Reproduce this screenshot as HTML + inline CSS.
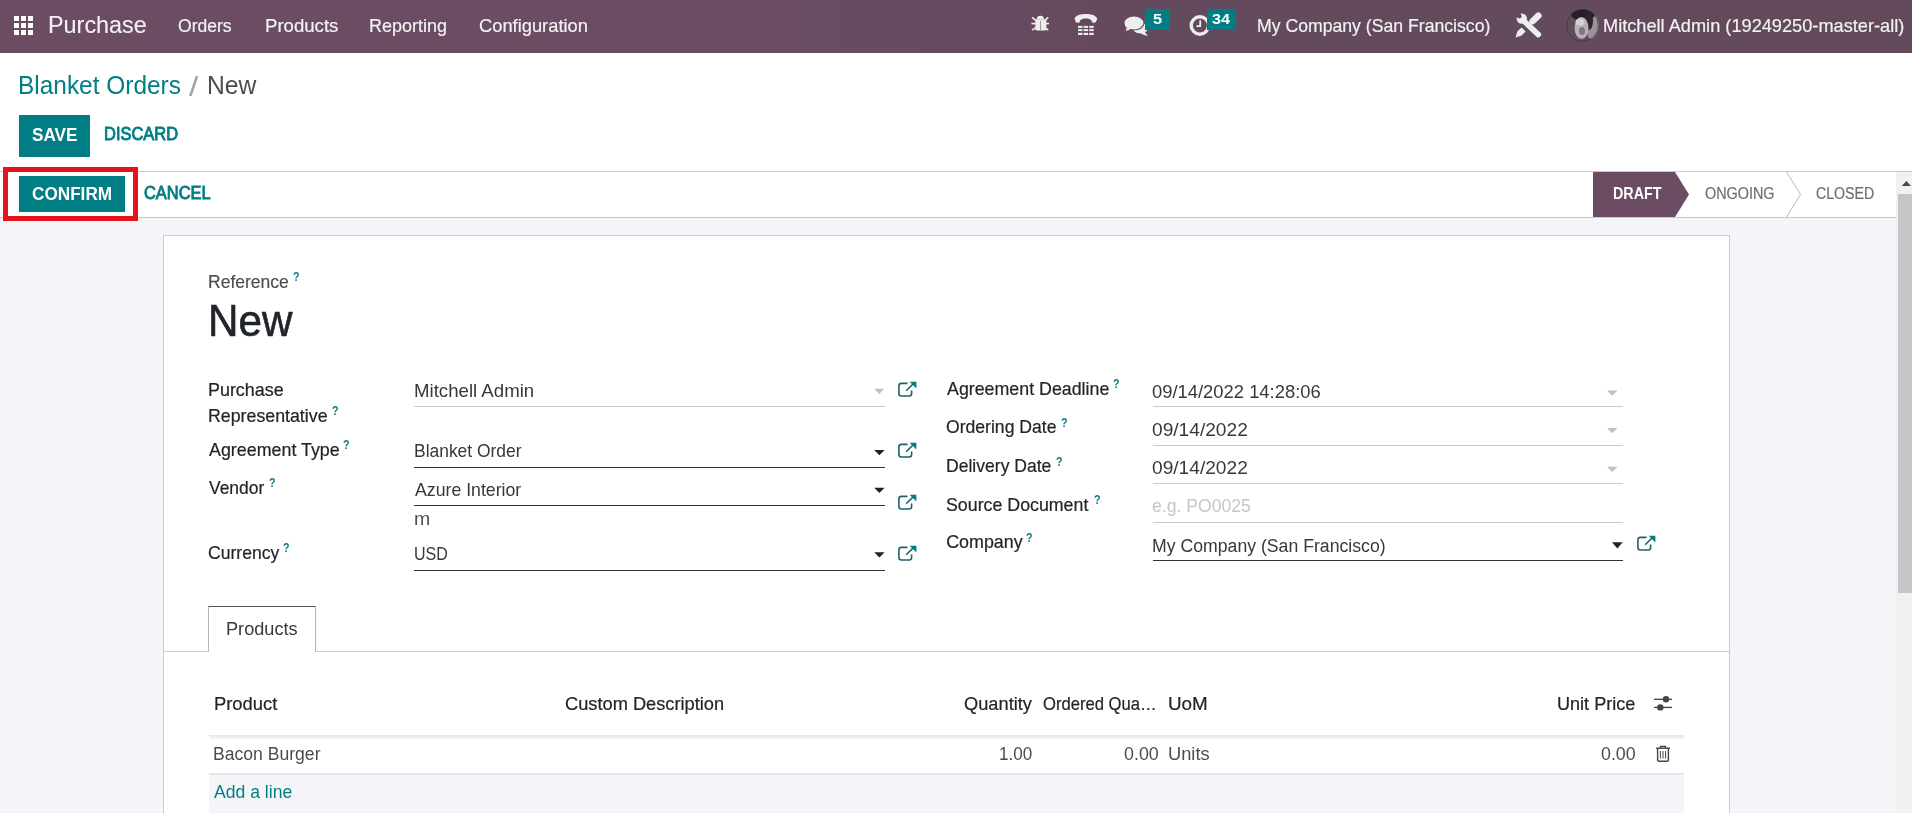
<!DOCTYPE html>
<html><head><meta charset="utf-8"><style>
html,body{margin:0;padding:0;width:1912px;height:813px;overflow:hidden;background:#fff;}
body{position:relative;font-family:"Liberation Sans",sans-serif;}
.t{position:absolute;white-space:pre;line-height:1;transform-origin:0 0;}
.b{position:absolute;box-sizing:border-box;}
svg{position:absolute;overflow:visible;}
</style></head><body>
<!-- navbar -->
<div class="b" style="left:0;top:0;width:1912px;height:53px;background:linear-gradient(to right,#6b4c63 0px,#6b4c63 720px,#654a5e 1100px,#624a5b 1912px)"></div>
<svg style="left:14px;top:16px" width="19" height="19" viewBox="0 0 19 19" fill="#fff">
<rect x="0" y="0" width="5" height="5"/><rect x="7" y="0" width="5" height="5"/><rect x="14" y="0" width="5" height="5"/>
<rect x="0" y="7" width="5" height="5"/><rect x="7" y="7" width="5" height="5"/><rect x="14" y="7" width="5" height="5"/>
<rect x="0" y="14" width="5" height="5"/><rect x="7" y="14" width="5" height="5"/><rect x="14" y="14" width="5" height="5"/>
</svg>
<!-- bug -->
<svg style="left:1030px;top:14px" width="20" height="20" viewBox="0 0 20 20" fill="#eee" stroke="none">
<path d="M6.6 5.3 A3.7 3.5 0 0 1 14 5.3 Z"/>
<rect x="5.3" y="5.3" width="11.1" height="11.3" rx="1.5"/>
<path d="M1.4 9.6 H19" stroke="#eee" stroke-width="1.6"/>
<path d="M2.2 3.4 L6 6.6 M18.2 3.4 L14.6 6.6 M2.2 16.2 L6 13.4 M18.2 16.2 L14.6 13.4" stroke="#eee" stroke-width="1.6"/>
<rect x="10" y="7" width="0.9" height="9" fill="#9a8a96"/>
</svg>
<!-- phone -->
<svg style="left:1074px;top:13px" width="24" height="23" viewBox="0 0 24 23" fill="#eee">
<path d="M0.5 5.2 C3 1.5 7 0.9 11.7 0.9 C16.4 0.9 20.6 1.5 23.3 5.2 L22.3 8.2 C21.4 9.8 19.6 10.2 18.2 9.6 L17.4 7.2 C15.6 5.7 13.8 5.4 11.7 5.4 C9.6 5.4 7.8 5.7 6.2 7.2 L5.4 9.6 C4 10.2 2.2 9.8 1.4 8.2 Z"/>
<rect x="4" y="12.9" width="4.5" height="2"/><rect x="9.6" y="12.9" width="4.5" height="2"/><rect x="15.2" y="12.9" width="4.5" height="2"/>
<rect x="4" y="16.1" width="4.5" height="2"/><rect x="9.6" y="16.1" width="4.5" height="2"/><rect x="15.2" y="16.1" width="4.5" height="2"/>
<rect x="4" y="19.8" width="4.5" height="2.2"/><rect x="9.6" y="19.8" width="4.5" height="2.2"/><rect x="15.2" y="19.8" width="4.5" height="2.2"/>
</svg>
<!-- chat -->
<svg style="left:1123px;top:15px" width="27" height="22" viewBox="0 0 27 22" fill="#eee">
<path d="M14 12 C18 12 21 9.5 21.5 8.5 C24 10 25 12 24.5 14.5 C24 16 23 17 22 17.5 L25 21 C22 20.5 19.5 19.5 18 18.5 C14.5 18.5 12 17.5 10.5 15.5 C12 15 13 13 14 12Z"/>
<path d="M11 1 C16.5 1 21 4 21 8 C21 12 16.5 15 11 15 C9.8 15 8.6 14.8 7.5 14.6 C6 15.8 3.5 16.5 1.3 16.4 C2.4 15.4 3 14.2 3.2 13 C1.8 11.7 1 10 1 8 C1 4 5.5 1 11 1Z" stroke="#6b4c63" stroke-width="1.1"/>
</svg>
<div class="b" style="left:1145px;top:8.5px;width:24.5px;height:21.5px;background:#017e84"></div>
<!-- clock -->
<svg style="left:1189px;top:14px" width="23" height="23" viewBox="0 0 23 23">
<circle cx="10.9" cy="11.5" r="8.7" fill="none" stroke="#eee" stroke-width="3.4"/>
<path d="M11.2 6.3 V12.2 H7.4" fill="none" stroke="#eee" stroke-width="1.8"/>
</svg>
<div class="b" style="left:1207px;top:8.5px;width:29px;height:21.5px;background:#017e84"></div>
<!-- tools -->
<svg style="left:0;top:0" width="1912" height="60" viewBox="0 0 1912 60">
<defs><mask id="wm"><rect x="1500" y="0" width="60" height="50" fill="#fff"/><circle cx="1519.3" cy="16.2" r="2.3" fill="#000"/><polygon points="1520.9,14.6 1517.7,17.8 1509.5,9.6 1512.7,6.4" fill="#000"/></mask></defs>
<g fill="#eee" mask="url(#wm)"><circle cx="1521.8" cy="18.6" r="5.2"/></g>
<path d="M1525 22 L1538.3 34.6" stroke="#eee" stroke-width="5.6" stroke-linecap="round"/>
<path d="M1532.6 21.2 L1538.4 15.6" stroke="#eee" stroke-width="6.4" stroke-linecap="round"/>
<polygon points="1515.6,37.4 1517.3,31.4 1521.6,27.4 1525.6,31.6 1521.6,35.6" fill="#eee"/>
</svg>
<!-- avatar -->
<svg style="left:1566px;top:9px" width="33" height="33" viewBox="0 0 33 33">
<defs><clipPath id="av"><circle cx="16.5" cy="16.5" r="16.3"/></clipPath></defs>
<g clip-path="url(#av)">
<rect width="33" height="33" fill="#5e4f5a"/>
<ellipse cx="27" cy="18" rx="7" ry="13" fill="#9c929a"/>
<ellipse cx="17" cy="5" rx="12" ry="7" fill="#252124"/>
<ellipse cx="23" cy="12" rx="4" ry="9" fill="#2c272a"/>
<ellipse cx="15.5" cy="19" rx="7" ry="11" fill="#b9b0b6"/>
<ellipse cx="14" cy="13" rx="4.5" ry="3.5" fill="#d6cfd4"/>
<ellipse cx="16" cy="22" rx="3" ry="4" fill="#857580"/>
<path d="M0 22 C3 30 8 33 12 33 L0 33 Z" fill="#2a2528"/>
</g>
<circle cx="16.5" cy="16.5" r="15.8" fill="none" stroke="#3a3238" stroke-width="1" opacity="0.6"/>
</svg>

<!-- control panel -->
<div class="b" style="left:19px;top:115px;width:71px;height:42px;background:#017e84"></div>
<!-- statusbar -->
<div class="b" style="left:0;top:171px;width:1912px;height:1px;background:#c8c9cb"></div>
<div class="b" style="left:0;top:217px;width:1896px;height:1px;background:#c8c9cb"></div>
<div class="b" style="left:0;top:218px;width:1896px;height:595px;background:#f4f5f8"></div>
<div class="b" style="left:19px;top:176px;width:106px;height:36px;background:#017e84"></div>
<div class="b" style="left:3px;top:167px;width:135px;height:54px;border:5px solid #e3141c"></div>
<svg style="left:0;top:0" width="1912" height="813" viewBox="0 0 1912 813">
<polygon points="1593,172 1675,172 1689,194.5 1675,217 1593,217" fill="#6b4c63"/>
<polyline points="1786.5,172 1800.5,194.5 1786.5,217" fill="none" stroke="#b9b9bc" stroke-width="1"/>
</svg>
<!-- scrollbar -->
<div class="b" style="left:1896px;top:172px;width:16px;height:641px;background:#f1f1f1"></div>
<div class="b" style="left:1898px;top:194px;width:14px;height:399px;background:#c5c5c8"></div>
<svg style="left:0;top:0" width="1912" height="813" viewBox="0 0 1912 813"><polygon points="1901.8,186 1906.4,180.9 1911,186" fill="#4a4548"/></svg>

<!-- sheet -->
<div class="b" style="left:163px;top:235px;width:1567px;height:600px;background:#fff;border:1px solid #cacbce"></div>

<!-- field underlines -->
<div class="b" style="left:414px;top:406px;width:471px;height:1px;background:#cbcbcd"></div>
<div class="b" style="left:414px;top:467px;width:471px;height:1px;background:#333"></div>
<div class="b" style="left:414px;top:505px;width:471px;height:1px;background:#333"></div>
<div class="b" style="left:414px;top:570px;width:471px;height:1px;background:#333"></div>
<div class="b" style="left:1153px;top:406px;width:470px;height:1px;background:#cbcbcd"></div>
<div class="b" style="left:1153px;top:445px;width:470px;height:1px;background:#cbcbcd"></div>
<div class="b" style="left:1153px;top:483px;width:470px;height:1px;background:#cbcbcd"></div>
<div class="b" style="left:1153px;top:522px;width:470px;height:1px;background:#cbcbcd"></div>
<div class="b" style="left:1153px;top:560px;width:470px;height:1px;background:#333"></div>
<svg style="left:0;top:0" width="1912" height="813" viewBox="0 0 1912 813">
<polygon points="874.2,388.8 884.4,388.8 879.3,393.9" fill="#c0c0c4"/>
<polygon points="874.2,450 884.6,450 879.4,455.3" fill="#222"/>
<polygon points="874.2,487.8 884.6,487.8 879.4,493" fill="#222"/>
<polygon points="874.2,552.2 884.6,552.2 879.4,557.5" fill="#222"/>
<polygon points="1607,390.5 1617.5,390.5 1612.25,395.8" fill="#c0c0c4"/>
<polygon points="1607,428 1617.5,428 1612.25,433.3" fill="#c0c0c4"/>
<polygon points="1607,466.7 1617.5,466.7 1612.25,472" fill="#c0c0c4"/>
<polygon points="1612,542.2 1622.7,542.2 1617.35,548.5" fill="#222"/>
</svg>
<!-- external link icons -->
<svg style="left:897px;top:381px" width="21" height="17" viewBox="0 0 21 17"><g fill="none" stroke="#1f6268" stroke-width="1.6"><path d="M10.5 2.4 H4.4 C2.6 2.4 1.9 3.2 1.9 5 V12.6 C1.9 14.4 2.6 15 4.4 15 H12.2 C13.8 15 14.6 14.4 14.6 12.6 V9.6"/><path d="M9.2 9.8 L17 2"/></g><polygon points="12.6,0.8 19.4,0.8 19.4,7.6" fill="#017e84"/></svg>
<svg style="left:897px;top:441.5px" width="21" height="17" viewBox="0 0 21 17"><g fill="none" stroke="#1f6268" stroke-width="1.6"><path d="M10.5 2.4 H4.4 C2.6 2.4 1.9 3.2 1.9 5 V12.6 C1.9 14.4 2.6 15 4.4 15 H12.2 C13.8 15 14.6 14.4 14.6 12.6 V9.6"/><path d="M9.2 9.8 L17 2"/></g><polygon points="12.6,0.8 19.4,0.8 19.4,7.6" fill="#017e84"/></svg>
<svg style="left:897px;top:494px" width="21" height="17" viewBox="0 0 21 17"><g fill="none" stroke="#1f6268" stroke-width="1.6"><path d="M10.5 2.4 H4.4 C2.6 2.4 1.9 3.2 1.9 5 V12.6 C1.9 14.4 2.6 15 4.4 15 H12.2 C13.8 15 14.6 14.4 14.6 12.6 V9.6"/><path d="M9.2 9.8 L17 2"/></g><polygon points="12.6,0.8 19.4,0.8 19.4,7.6" fill="#017e84"/></svg>
<svg style="left:897px;top:545px" width="21" height="17" viewBox="0 0 21 17"><g fill="none" stroke="#1f6268" stroke-width="1.6"><path d="M10.5 2.4 H4.4 C2.6 2.4 1.9 3.2 1.9 5 V12.6 C1.9 14.4 2.6 15 4.4 15 H12.2 C13.8 15 14.6 14.4 14.6 12.6 V9.6"/><path d="M9.2 9.8 L17 2"/></g><polygon points="12.6,0.8 19.4,0.8 19.4,7.6" fill="#017e84"/></svg>
<svg style="left:1636px;top:535px" width="21" height="17" viewBox="0 0 21 17"><g fill="none" stroke="#1f6268" stroke-width="1.6"><path d="M10.5 2.4 H4.4 C2.6 2.4 1.9 3.2 1.9 5 V12.6 C1.9 14.4 2.6 15 4.4 15 H12.2 C13.8 15 14.6 14.4 14.6 12.6 V9.6"/><path d="M9.2 9.8 L17 2"/></g><polygon points="12.6,0.8 19.4,0.8 19.4,7.6" fill="#017e84"/></svg>

<!-- tabs -->
<div class="b" style="left:164px;top:651px;width:1565px;height:1px;background:#c8cacd"></div>
<div class="b" style="left:208px;top:606px;width:108px;height:46px;background:#fff;border:1px solid #b4b6ba;border-top:1px solid #5e525a;border-bottom:none"></div>

<!-- table -->
<div class="b" style="left:209px;top:735px;width:1475px;height:4px;background:linear-gradient(#e6e7e9,#f6f7f8)"></div>
<div class="b" style="left:209px;top:773px;width:1475px;height:1.5px;background:#e6e7ea"></div>
<div class="b" style="left:209px;top:811px;width:1475px;height:1px;border-top:1px dotted #c8c8c8"></div>
<div class="b" style="left:209px;top:774.5px;width:1475px;height:40px;background:#f4f5f8"></div>
<svg style="left:1652px;top:693px" width="22" height="20" viewBox="0 0 22 20">
<g stroke="#444" stroke-width="1.3"><path d="M2 6.3 H20"/><path d="M2 14.4 H20"/></g>
<circle cx="14" cy="6.3" r="3.2" fill="#444"/><circle cx="8.3" cy="14.4" r="3.2" fill="#444"/>
</svg>
<svg style="left:1654px;top:744px" width="18" height="19" viewBox="0 0 18 19">
<g fill="none" stroke="#444" stroke-width="1.4"><path d="M2 4.2 H16"/><path d="M6.5 4 V2.4 H11.5 V4"/><path d="M3.6 4.5 V16 C3.6 16.8 4.2 17.2 5 17.2 H13 C13.8 17.2 14.4 16.8 14.4 16 V4.5"/><path d="M6.4 7 V14.6 M9 7 V14.6 M11.6 7 V14.6" stroke-width="1"/></g>
</svg>

<div id="tx" style="position:absolute;left:0;top:0;width:1912px;height:813px;will-change:transform">
<div class="t" style="left:48.06px;top:13.00px;font-size:24.13px;font-weight:400;color:#f2f2f2;transform:scaleX(0.9697);-webkit-text-stroke:0.1px #f2f2f2;">Purchase</div>
<div class="t" style="left:178.48px;top:16.00px;font-size:19.04px;font-weight:400;color:#f2f2f2;transform:scaleX(0.9211);-webkit-text-stroke:0.2px #f2f2f2;">Orders</div>
<div class="t" style="left:264.62px;top:16.00px;font-size:19.04px;font-weight:400;color:#f2f2f2;transform:scaleX(0.9767);-webkit-text-stroke:0.2px #f2f2f2;">Products</div>
<div class="t" style="left:369.26px;top:16.00px;font-size:19.04px;font-weight:400;color:#f2f2f2;transform:scaleX(0.9444);-webkit-text-stroke:0.2px #f2f2f2;">Reporting</div>
<div class="t" style="left:479.44px;top:16.00px;font-size:19.04px;font-weight:400;color:#f2f2f2;transform:scaleX(0.9622);-webkit-text-stroke:0.2px #f2f2f2;">Configuration</div>
<div class="t" style="left:1256.85px;top:17.00px;font-size:18.6px;font-weight:400;color:#f2f2f2;transform:scaleX(0.9488);-webkit-text-stroke:0.2px #f2f2f2;">My Company (San Francisco)</div>
<div class="t" style="left:1602.84px;top:16.00px;font-size:19.04px;font-weight:400;color:#f2f2f2;transform:scaleX(0.9559);-webkit-text-stroke:0.2px #f2f2f2;">Mitchell Admin (19249250-master-all)</div>
<div class="t" style="left:18.13px;top:72.00px;font-size:26.16px;font-weight:400;color:#017e84;transform:scaleX(0.9339);">Blanket Orders</div>
<div class="t" style="left:189.00px;top:72.00px;font-size:28.34px;font-weight:400;color:#a3a3a6;transform:scaleX(1.1875);">/</div>
<div class="t" style="left:206.82px;top:72.00px;font-size:26.16px;font-weight:400;color:#4c4c4c;transform:scaleX(0.9420);">New</div>
<div class="t" style="left:32.06px;top:126.00px;font-size:18.17px;font-weight:700;color:#ffffff;transform:scaleX(0.9435);">SAVE</div>
<div class="t" style="left:103.89px;top:125.00px;font-size:18.17px;font-weight:400;color:#017e84;transform:scaleX(0.9063);-webkit-text-stroke:0.9px #017e84;">DISCARD</div>
<div class="t" style="left:32.25px;top:185.00px;font-size:18.17px;font-weight:700;color:#ffffff;transform:scaleX(0.9451);">CONFIRM</div>
<div class="t" style="left:143.60px;top:184.00px;font-size:18.17px;font-weight:400;color:#017e84;transform:scaleX(0.9041);-webkit-text-stroke:0.9px #017e84;">CANCEL</div>
<div class="t" style="left:1612.92px;top:185.00px;font-size:16.28px;font-weight:700;color:#ffffff;transform:scaleX(0.8796);">DRAFT</div>
<div class="t" style="left:1704.62px;top:185.00px;font-size:16.28px;font-weight:400;color:#6e6e71;transform:scaleX(0.8844);-webkit-text-stroke:0.2px #6e6e71;">ONGOING</div>
<div class="t" style="left:1816.03px;top:185.00px;font-size:16.28px;font-weight:400;color:#6e6e71;transform:scaleX(0.8692);-webkit-text-stroke:0.2px #6e6e71;">CLOSED</div>
<div class="t" style="left:208.02px;top:274.00px;font-size:17.88px;font-weight:400;color:#4c4c4c;transform:scaleX(0.9802);-webkit-text-stroke:0.15px #4c4c4c;">Reference</div>
<div class="t" style="left:207.88px;top:299.00px;font-size:44.91px;font-weight:400;color:#212529;transform:scaleX(0.9391);-webkit-text-stroke:0.6px #212529;">New</div>
<div class="t" style="left:208.00px;top:382.00px;font-size:17.88px;font-weight:400;color:#212529;transform:scaleX(1.0027);-webkit-text-stroke:0.2px #212529;">Purchase</div>
<div class="t" style="left:208.01px;top:408.00px;font-size:17.88px;font-weight:400;color:#212529;transform:scaleX(0.9950);-webkit-text-stroke:0.2px #212529;">Representative</div>
<div class="t" style="left:209.00px;top:442.00px;font-size:17.88px;font-weight:400;color:#212529;transform:scaleX(1.0000);-webkit-text-stroke:0.2px #212529;">Agreement Type</div>
<div class="t" style="left:209.00px;top:480.00px;font-size:17.88px;font-weight:400;color:#212529;transform:scaleX(0.9754);-webkit-text-stroke:0.2px #212529;">Vendor</div>
<div class="t" style="left:208.02px;top:545.00px;font-size:17.88px;font-weight:400;color:#212529;transform:scaleX(0.9831);-webkit-text-stroke:0.2px #212529;">Currency</div>
<div class="t" style="left:413.96px;top:383.00px;font-size:17.88px;font-weight:400;color:#383838;transform:scaleX(1.0442);">Mitchell Admin</div>
<div class="t" style="left:414.02px;top:443.00px;font-size:17.88px;font-weight:400;color:#383838;transform:scaleX(0.9761);">Blanket Order</div>
<div class="t" style="left:415.00px;top:482.00px;font-size:17.88px;font-weight:400;color:#383838;transform:scaleX(0.9907);">Azure Interior</div>
<div class="t" style="left:413.91px;top:511.00px;font-size:17.88px;font-weight:400;color:#505050;transform:scaleX(1.0923);">m</div>
<div class="t" style="left:414.10px;top:546.00px;font-size:17.88px;font-weight:400;color:#383838;transform:scaleX(0.8972);">USD</div>
<div class="t" style="left:947.20px;top:381.00px;font-size:17.88px;font-weight:400;color:#212529;transform:scaleX(0.9969);-webkit-text-stroke:0.2px #212529;">Agreement Deadline</div>
<div class="t" style="left:946.22px;top:419.00px;font-size:17.88px;font-weight:400;color:#212529;transform:scaleX(0.9847);-webkit-text-stroke:0.2px #212529;">Ordering Date</div>
<div class="t" style="left:946.22px;top:458.00px;font-size:17.88px;font-weight:400;color:#212529;transform:scaleX(0.9830);-webkit-text-stroke:0.2px #212529;">Delivery Date</div>
<div class="t" style="left:946.20px;top:497.00px;font-size:17.88px;font-weight:400;color:#212529;transform:scaleX(0.9958);-webkit-text-stroke:0.2px #212529;">Source Document</div>
<div class="t" style="left:946.20px;top:534.00px;font-size:17.88px;font-weight:400;color:#212529;transform:scaleX(1.0000);-webkit-text-stroke:0.2px #212529;">Company</div>
<div class="t" style="left:1152.17px;top:384.00px;font-size:17.88px;font-weight:400;color:#383838;transform:scaleX(1.0296);">09/14/2022 14:28:06</div>
<div class="t" style="left:1152.13px;top:422.00px;font-size:17.88px;font-weight:400;color:#383838;transform:scaleX(1.0716);">09/14/2022</div>
<div class="t" style="left:1152.13px;top:460.00px;font-size:17.88px;font-weight:400;color:#383838;transform:scaleX(1.0716);">09/14/2022</div>
<div class="t" style="left:1152.21px;top:498.00px;font-size:17.88px;font-weight:400;color:#c4c7ca;transform:scaleX(0.9857);">e.g. PO0025</div>
<div class="t" style="left:1152.21px;top:538.00px;font-size:17.88px;font-weight:400;color:#383838;transform:scaleX(0.9889);">My Company (San Francisco)</div>
<div class="t" style="left:292.83px;top:271.00px;font-size:12.35px;font-weight:700;color:#0c7a80;transform:scaleX(0.8667);">?</div>
<div class="t" style="left:331.73px;top:405.00px;font-size:12.35px;font-weight:700;color:#0c7a80;transform:scaleX(0.8667);">?</div>
<div class="t" style="left:342.53px;top:439.00px;font-size:12.35px;font-weight:700;color:#0c7a80;transform:scaleX(0.8667);">?</div>
<div class="t" style="left:269.43px;top:477.00px;font-size:12.35px;font-weight:700;color:#0c7a80;transform:scaleX(0.8667);">?</div>
<div class="t" style="left:283.13px;top:542.00px;font-size:12.35px;font-weight:700;color:#0c7a80;transform:scaleX(0.8667);">?</div>
<div class="t" style="left:1112.53px;top:378.00px;font-size:12.35px;font-weight:700;color:#0c7a80;transform:scaleX(0.8667);">?</div>
<div class="t" style="left:1060.83px;top:417.00px;font-size:12.35px;font-weight:700;color:#0c7a80;transform:scaleX(0.8667);">?</div>
<div class="t" style="left:1055.63px;top:456.00px;font-size:12.35px;font-weight:700;color:#0c7a80;transform:scaleX(0.8667);">?</div>
<div class="t" style="left:1093.63px;top:494.00px;font-size:12.35px;font-weight:700;color:#0c7a80;transform:scaleX(0.8667);">?</div>
<div class="t" style="left:1026.43px;top:532.00px;font-size:12.35px;font-weight:700;color:#0c7a80;transform:scaleX(0.8667);">?</div>
<div class="t" style="left:225.88px;top:621.00px;font-size:17.88px;font-weight:400;color:#383838;transform:scaleX(1.0159);">Products</div>
<div class="t" style="left:213.97px;top:696.00px;font-size:17.88px;font-weight:400;color:#212529;transform:scaleX(1.0283);-webkit-text-stroke:0.2px #212529;">Product</div>
<div class="t" style="left:564.68px;top:696.00px;font-size:17.88px;font-weight:400;color:#212529;transform:scaleX(1.0214);-webkit-text-stroke:0.2px #212529;">Custom Description</div>
<div class="t" style="left:963.58px;top:696.00px;font-size:17.88px;font-weight:400;color:#212529;transform:scaleX(1.0215);-webkit-text-stroke:0.2px #212529;">Quantity</div>
<div class="t" style="left:1043.07px;top:696.00px;font-size:17.88px;font-weight:400;color:#212529;transform:scaleX(0.9311);-webkit-text-stroke:0.2px #212529;">Ordered Qua…</div>
<div class="t" style="left:1168.25px;top:696.00px;font-size:17.88px;font-weight:400;color:#212529;transform:scaleX(1.0543);-webkit-text-stroke:0.2px #212529;">UoM</div>
<div class="t" style="left:1556.69px;top:696.00px;font-size:17.88px;font-weight:400;color:#212529;transform:scaleX(1.0118);-webkit-text-stroke:0.2px #212529;">Unit Price</div>
<div class="t" style="left:213.32px;top:746.00px;font-size:17.88px;font-weight:400;color:#4c4c4c;transform:scaleX(0.9843);">Bacon Burger</div>
<div class="t" style="left:998.55px;top:746.00px;font-size:17.88px;font-weight:400;color:#4c4c4c;transform:scaleX(0.9545);">1.00</div>
<div class="t" style="left:1124.00px;top:746.00px;font-size:17.88px;font-weight:400;color:#4c4c4c;transform:scaleX(1.0000);">0.00</div>
<div class="t" style="left:1167.98px;top:746.00px;font-size:17.88px;font-weight:400;color:#4c4c4c;transform:scaleX(1.0231);">Units</div>
<div class="t" style="left:1600.70px;top:746.00px;font-size:17.88px;font-weight:400;color:#4c4c4c;transform:scaleX(0.9970);">0.00</div>
<div class="t" style="left:214.00px;top:784.00px;font-size:17.88px;font-weight:400;color:#017e84;transform:scaleX(0.9848);">Add a line</div>
<div class="t" style="left:1152.63px;top:11.00px;font-size:15.26px;font-weight:700;color:#ffffff;transform:scaleX(1.0714);">5</div>
<div class="t" style="left:1211.84px;top:11.00px;font-size:15.26px;font-weight:700;color:#ffffff;transform:scaleX(1.0625);">34</div>
</div>
</body></html>
